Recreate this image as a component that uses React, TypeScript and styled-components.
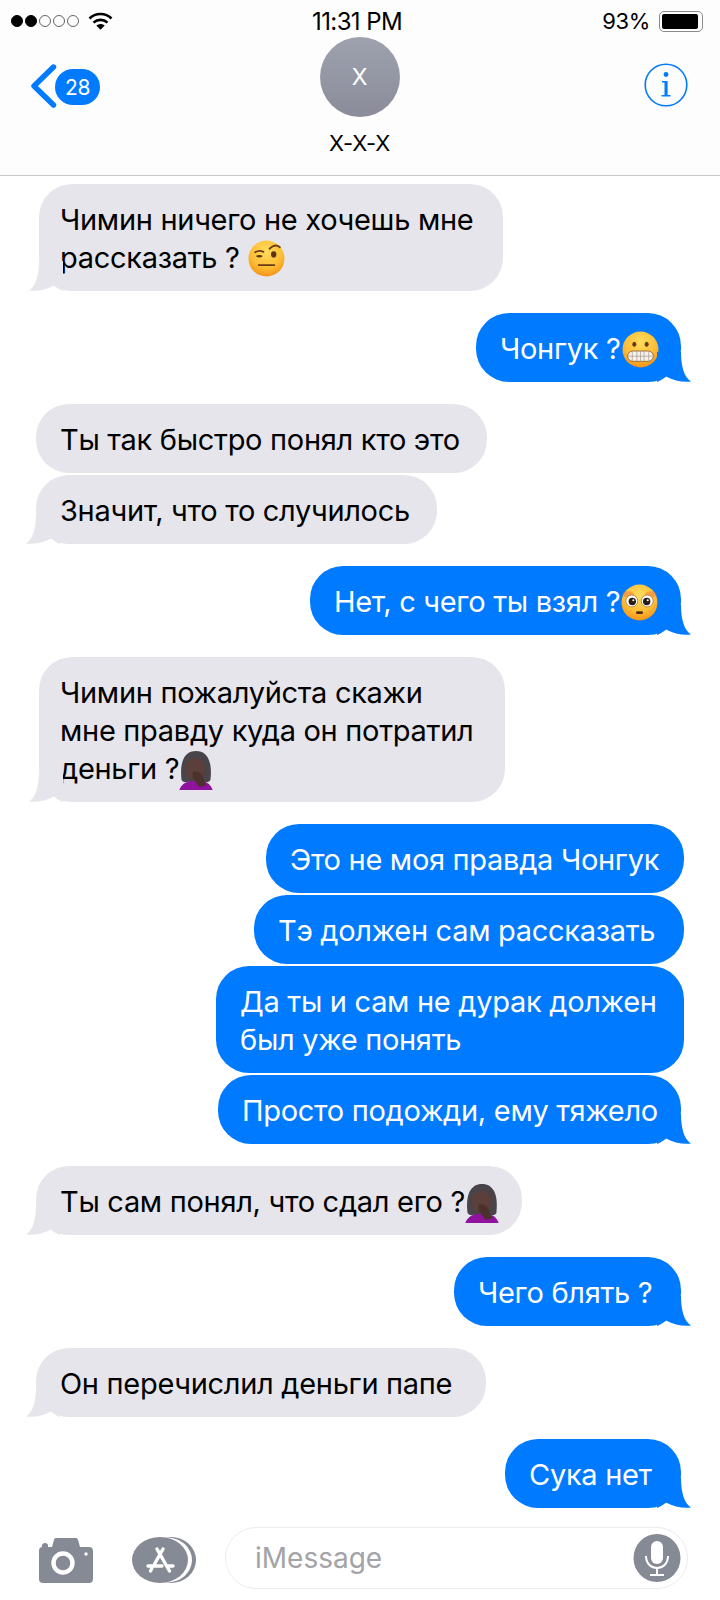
import React from "react";
import styled, { createGlobalStyle } from "styled-components";

const Global = createGlobalStyle`
  html, body { margin: 0; padding: 0; background: #fff; }
  * { box-sizing: border-box; }
`;

const FONT = `Inter, "Liberation Sans", Arial, sans-serif`;
const BLUE = "#007aff";

const Screen = styled.div`
  width: 720px;
  height: 1600px;
  display: flex;
  flex-direction: column;
  background: #fff;
  font-family: ${FONT};
  overflow: hidden;
`;

const Header = styled.header`
  height: 176px;
  flex: none;
  background: #fdfdfe;
  border-bottom: 1px solid #c8c8ca;
  display: flex;
  flex-direction: column;
`;

const StatusBar = styled.div`
  height: 37px;
  padding: 5px 17px 0 11px;
  display: grid;
  grid-template-columns: 1fr auto 1fr;
  align-items: center;
  color: #000;
  font-size: 22px;
`;

const StatusLeft = styled.div`
  display: flex;
  align-items: center;
  gap: 9px;
`;

const Dots = styled.div`
  display: flex;
  gap: 2px;
`;

const Dot = styled.span<{ $on: boolean }>`
  width: 12px;
  height: 12px;
  border-radius: 50%;
  border: 1px solid #000;
  background: ${(p) => (p.$on ? "#000" : "transparent")};
  opacity: ${(p) => (p.$on ? 1 : 0.6)};
`;

const Clock = styled.div`
  font-size: 24px;
  letter-spacing: -0.6px;
`;

const StatusRight = styled.div`
  display: flex;
  justify-content: flex-end;
  align-items: center;
  gap: 9px;
  letter-spacing: -0.4px;
`;

const Battery = styled.div`
  width: 44px;
  height: 21px;
  border: 1.5px solid #8a8a8a;
  border-radius: 5px;
  padding: 2px 4px 2px 2px;
  &::before {
    content: "";
    display: block;
    height: 100%;
    background: #000;
    border-radius: 2px;
  }
`;

const Nav = styled.div`
  flex: 1;
  display: grid;
  grid-template-columns: 1fr auto 1fr;
  padding: 0 32px 0 30px;
`;

const NavLeft = styled.div`
  display: flex;
  align-items: flex-start;
  padding-top: 27px;
`;

const NavRight = styled.div`
  display: flex;
  justify-content: flex-end;
  align-items: flex-start;
  padding-top: 26px;
`;

const Badge = styled.span`
  margin: 5px 0 0 -2px;
  width: 45px;
  height: 36px;
  border-radius: 18px;
  background: ${BLUE};
  color: #fff;
  font-size: 21px;
  letter-spacing: -0.4px;
  display: flex;
  align-items: center;
  justify-content: center;
`;

const Contact = styled.div`
  display: flex;
  flex-direction: column;
  align-items: center;
  margin-left: 1px;
`;

const Avatar = styled.div`
  width: 80px;
  height: 80px;
  border-radius: 50%;
  background: linear-gradient(#9ea1ae, #8a8d99);
  color: #fff;
  font-size: 23px;
  display: flex;
  align-items: center;
  justify-content: center;
`;

const ContactName = styled.div`
  margin-top: 13px;
  font-size: 22px;
  color: #000;
  letter-spacing: -0.3px;
`;

const Thread = styled.main`
  flex: 1;
  display: flex;
  flex-direction: column;
  padding-top: 8px;
`;

const Row = styled.div<{ $me?: boolean; $gap: number; $inset: number }>`
  display: flex;
  justify-content: ${(p) => (p.$me ? "flex-end" : "flex-start")};
  margin-top: ${(p) => p.$gap}px;
  ${(p) => (p.$me ? `padding-right: ${p.$inset}px;` : `padding-left: ${p.$inset}px;`)}
`;

const Bubble = styled.div<{ $me?: boolean; $w: number; $pad?: number }>`
  position: relative;
  width: ${(p) => p.$w}px;
  padding: 17px 0 14px ${(p) => p.$pad ?? 24}px;
  border-radius: 33px;
  background: ${(p) => (p.$me ? BLUE : "#e6e5eb")};
  color: ${(p) => (p.$me ? "#fff" : "#000")};
  font-size: 29px;
  letter-spacing: -0.3px;
  line-height: 38px;
  white-space: nowrap;
`;

const TailMark = styled.svg<{ $me?: boolean }>`
  position: absolute;
  bottom: 0;
  width: 34px;
  height: 30px;
  ${(p) => (p.$me ? "right: -10px;" : "left: -10px; transform: scaleX(-1);")}
`;

const InlineEmoji = styled.svg<{ $large?: boolean }>`
  display: inline-block;
  width: ${(p) => (p.$large ? 40 : 37)}px;
  height: ${(p) => (p.$large ? 40 : 37)}px;
  margin: -6px 0 -6px ${(p) => (p.$large ? -3 : 1)}px;
  vertical-align: ${(p) => (p.$large ? -5 : -3)}px;
`;

const Composer = styled.footer`
  flex: none;
  height: 92px;
  display: flex;
  align-items: flex-start;
  padding: 19px 0 0 39px;
`;

const CameraIcon = styled.svg`
  display: block;
  flex: none;
  width: 54px;
  height: 45px;
  margin-top: 11px;
`;

const AppsIcon = styled.svg`
  display: block;
  flex: none;
  width: 64px;
  height: 46px;
  margin: 10px 0 0 39px;
`;

const Field = styled.div`
  margin-left: 29px;
  width: 463px;
  height: 62px;
  border: 1px solid #ececef;
  border-radius: 31px;
  background: #fff;
  display: flex;
  align-items: center;
  justify-content: space-between;
  padding: 0 6px 0 29px;
  color: #a3a3a8;
  font-size: 28px;
`;

const Tail = ({ me }: { me?: boolean }) => (
  <TailMark $me={me} viewBox="0 0 34 30">
    <path
      d="M24 0 C24 14 27 25 34 29.5 C26 30.4 17 29 9 24.5 C6 27 3 29 0 30 V0 Z"
      fill={me ? BLUE : "#e6e5eb"}
    />
  </TailMark>
);

const FaceGradient = ({ id }: { id: string }) => (
  <defs>
    <radialGradient id={id} cx="50%" cy="30%" r="75%">
      <stop offset="0%" stopColor="#ffdc5e" />
      <stop offset="60%" stopColor="#fdbd35" />
      <stop offset="100%" stopColor="#f38a12" />
    </radialGradient>
  </defs>
);

const RaisedBrow = () => (
  <InlineEmoji viewBox="0 0 36 36">
    <FaceGradient id="fa" />
    <circle cx="18" cy="18" r="17.5" fill="url(#fa)" />
    <path d="M7 12 Q11 9.5 15 11.5" stroke="#6b3d14" strokeWidth="1.8" fill="none" strokeLinecap="round" />
    <path d="M21 8.5 Q26 3 31 7" stroke="#6b3d14" strokeWidth="1.8" fill="none" strokeLinecap="round" />
    <path d="M7.5 15.5 Q11 13.5 14.5 15.5 Q11 18.5 7.5 15.5 Z" fill="#5a3413" />
    <ellipse cx="25" cy="14" rx="2.6" ry="3" fill="#5a3413" />
    <rect x="9.5" y="23.5" width="17" height="1.8" rx="0.9" fill="#6b3d14" />
  </InlineEmoji>
);

const Grimace = () => (
  <InlineEmoji viewBox="0 0 36 36">
    <FaceGradient id="fb" />
    <circle cx="18" cy="18" r="17.5" fill="url(#fb)" />
    <ellipse cx="12" cy="13" rx="2" ry="2.6" fill="#6b3d14" />
    <ellipse cx="24" cy="13" rx="2" ry="2.6" fill="#6b3d14" />
    <rect x="5.5" y="19.5" width="25" height="10" rx="5" fill="#f4f1ee" stroke="#8a5a2a" strokeWidth="0.8" />
    <path d="M6 24.5 H30 M10 20 V29 M14.5 19.5 V29.5 M18 19.5 V29.5 M21.5 19.5 V29.5 M26 20 V29" stroke="#a89a8c" strokeWidth="0.7" />
  </InlineEmoji>
);

const Flushed = () => (
  <InlineEmoji viewBox="0 0 36 36">
    <FaceGradient id="fc" />
    <circle cx="18" cy="18" r="17.5" fill="url(#fc)" />
    <ellipse cx="7" cy="10" rx="5.5" ry="3" fill="#f5703a" opacity="0.45" />
    <ellipse cx="29" cy="10" rx="5.5" ry="3" fill="#f5703a" opacity="0.45" />
    <circle cx="10.5" cy="16.5" r="5.8" fill="#fff" stroke="#8a5a2a" strokeWidth="0.6" />
    <circle cx="25.5" cy="16.5" r="5.8" fill="#fff" stroke="#8a5a2a" strokeWidth="0.6" />
    <circle cx="11" cy="17" r="3.6" fill="#2b1c12" />
    <circle cx="25" cy="17" r="3.6" fill="#2b1c12" />
    <circle cx="12" cy="15.8" r="1" fill="#fff" />
    <circle cx="26" cy="15.8" r="1" fill="#fff" />
    <rect x="14.6" y="26.5" width="6.8" height="2.8" rx="1.3" fill="#5a2f10" />
  </InlineEmoji>
);

const Woman = () => (
  <InlineEmoji $large viewBox="0 0 36 36">
    <path d="M3 36 C5 30 10 29 13 27 H23 C27 29 31 30 33 36 Z" fill="#8f139c" />
    <path d="M5 27 C3 10 8 1 18 1 C28 1 33 10 31 27 C29 30 26 29 24 28 H12 C10 29 7 30 5 27 Z" fill="#49434a" />
    <ellipse cx="17.5" cy="17" rx="9" ry="10" fill="#5b3f3a" />
    <path d="M15 20 C18 18 22 20 24 24 L27 32 L21 33 L15 25 Z" fill="#4c302c" />
  </InlineEmoji>
);

export default function App() {
  return (
    <Screen>
      <Global />
      <Header>
        <StatusBar>
          <StatusLeft>
            <Dots>
              <Dot $on />
              <Dot $on />
              <Dot $on={false} />
              <Dot $on={false} />
              <Dot $on={false} />
            </Dots>
            <svg width="25" height="18" viewBox="0 0 24 18">
              <path d="M1 6.5 C7 0.5 17 0.5 23 6.5" stroke="#000" strokeWidth="2.6" fill="none" />
              <path d="M5 10.6 C9 7 15 7 19 10.6" stroke="#000" strokeWidth="2.6" fill="none" />
              <path d="M7.8 13.4 C10.4 11.4 13.6 11.4 16.2 13.4 L12 17.8 Z" fill="#000" />
            </svg>
          </StatusLeft>
          <Clock>11:31 PM</Clock>
          <StatusRight>
            93%
            <Battery />
          </StatusRight>
        </StatusBar>
        <Nav>
          <NavLeft>
            <svg width="27" height="44" viewBox="0 0 27 44">
              <path d="M23.5 3 L4 22 L23.5 41" stroke={BLUE} strokeWidth="5.4" strokeLinecap="round" strokeLinejoin="round" fill="none" />
            </svg>
            <Badge>28</Badge>
          </NavLeft>
          <Contact>
            <Avatar>X</Avatar>
            <ContactName>X-X-X</ContactName>
          </Contact>
          <NavRight>
            <svg width="44" height="44" viewBox="0 0 44 44">
              <circle cx="22" cy="22" r="20.8" stroke={BLUE} strokeWidth="1.6" fill="none" />
              <circle cx="22" cy="11.5" r="2.4" fill={BLUE} />
              <path d="M18 18 H23.6 V32 H26.5 V33.6 H17.5 V32 H20.5 V19.6 H18 Z" fill={BLUE} />
            </svg>
          </NavRight>
        </Nav>
      </Header>
      <Thread>
        <Row $gap={0} $inset={39}>
          <Bubble $w={464} $pad={21}>
            <Tail />
            Чимин ничего не хочешь мне
            <br />
            рассказать ? <RaisedBrow />
          </Bubble>
        </Row>
        <Row $me $gap={22} $inset={39}>
          <Bubble $me $w={205}>
            <Tail me />
            Чонгук ?<Grimace />
          </Bubble>
        </Row>
        <Row $gap={22} $inset={36}>
          <Bubble $w={451}>Ты так быстро понял кто это</Bubble>
        </Row>
        <Row $gap={2} $inset={36}>
          <Bubble $w={401}>
            <Tail />
            Значит, что то случилось
          </Bubble>
        </Row>
        <Row $me $gap={22} $inset={39}>
          <Bubble $me $w={371}>
            <Tail me />
            Нет, с чего ты взял ?<Flushed />
          </Bubble>
        </Row>
        <Row $gap={22} $inset={39}>
          <Bubble $w={466} $pad={21}>
            <Tail />
            Чимин пожалуйста скажи
            <br />
            мне правду куда он потратил
            <br />
            деньги ?<Woman />
          </Bubble>
        </Row>
        <Row $me $gap={22} $inset={36}>
          <Bubble $me $w={418}>Это не моя правда Чонгук</Bubble>
        </Row>
        <Row $me $gap={2} $inset={36}>
          <Bubble $me $w={430}>Тэ должен сам рассказать</Bubble>
        </Row>
        <Row $me $gap={2} $inset={36}>
          <Bubble $me $w={468}>
            Да ты и сам не дурак должен
            <br />
            был уже понять
          </Bubble>
        </Row>
        <Row $me $gap={2} $inset={39}>
          <Bubble $me $w={463}>
            <Tail me />
            Просто подожди, ему тяжело
          </Bubble>
        </Row>
        <Row $gap={22} $inset={36}>
          <Bubble $w={486}>
            <Tail />
            Ты сам понял, что сдал его ?<Woman />
          </Bubble>
        </Row>
        <Row $me $gap={22} $inset={39}>
          <Bubble $me $w={227}>
            <Tail me />
            Чего блять ?
          </Bubble>
        </Row>
        <Row $gap={22} $inset={36}>
          <Bubble $w={450}>
            <Tail />
            Он перечислил деньги папе
          </Bubble>
        </Row>
        <Row $me $gap={22} $inset={39}>
          <Bubble $me $w={176}>
            <Tail me />
            Сука нет
          </Bubble>
        </Row>
      </Thread>
      <Composer>
        <CameraIcon viewBox="0 0 54 45">
          <path
            d="M3 9 V7.5 Q3 5 6 5 Q9 5 9 7.5 V9 H13 L15 2 C15.4 0.6 16 0 17.5 0 H36.5 C38 0 38.6 0.6 39 2 L41 9 H50 C52.5 9 54 10.5 54 13 V41 C54 43.5 52.5 45 50 45 H4 C1.5 45 0 43.5 0 41 V13 C0 10.5 1.5 9 3 9 Z"
            fill="#858a94"
          />
          <circle cx="24" cy="25" r="9.5" fill="none" stroke="#fff" strokeWidth="4.4" />
          <circle cx="47" cy="16" r="1.7" fill="#fff" />
        </CameraIcon>
        <AppsIcon viewBox="0 0 64 46">
          <ellipse cx="39" cy="23" rx="25" ry="23" fill="#858a94" />
          <ellipse cx="35" cy="23" rx="25" ry="22.5" fill="#fff" />
          <ellipse cx="28" cy="23" rx="28" ry="23" fill="#858a94" />
          <path
            d="M25 12 L37.5 34 M31 12 L22.5 27 M20 31 L18.5 34 M16 29 H30 M35 29 H41"
            stroke="#fff"
            strokeWidth="3.4"
            strokeLinecap="round"
            fill="none"
          />
        </AppsIcon>
        <Field>
          iMessage
          <svg width="48" height="48" viewBox="0 0 48 48">
            <ellipse cx="24" cy="24" rx="23.5" ry="24" fill="#858a94" />
            <rect x="18" y="7" width="12" height="23" rx="6" fill="#fff" />
            <path d="M13 22 C13 38 35 38 35 22" stroke="#fff" strokeWidth="2" fill="none" />
            <path d="M24 34 V40 M17 41 H31" stroke="#fff" strokeWidth="2" />
          </svg>
        </Field>
      </Composer>
    </Screen>
  );
}
